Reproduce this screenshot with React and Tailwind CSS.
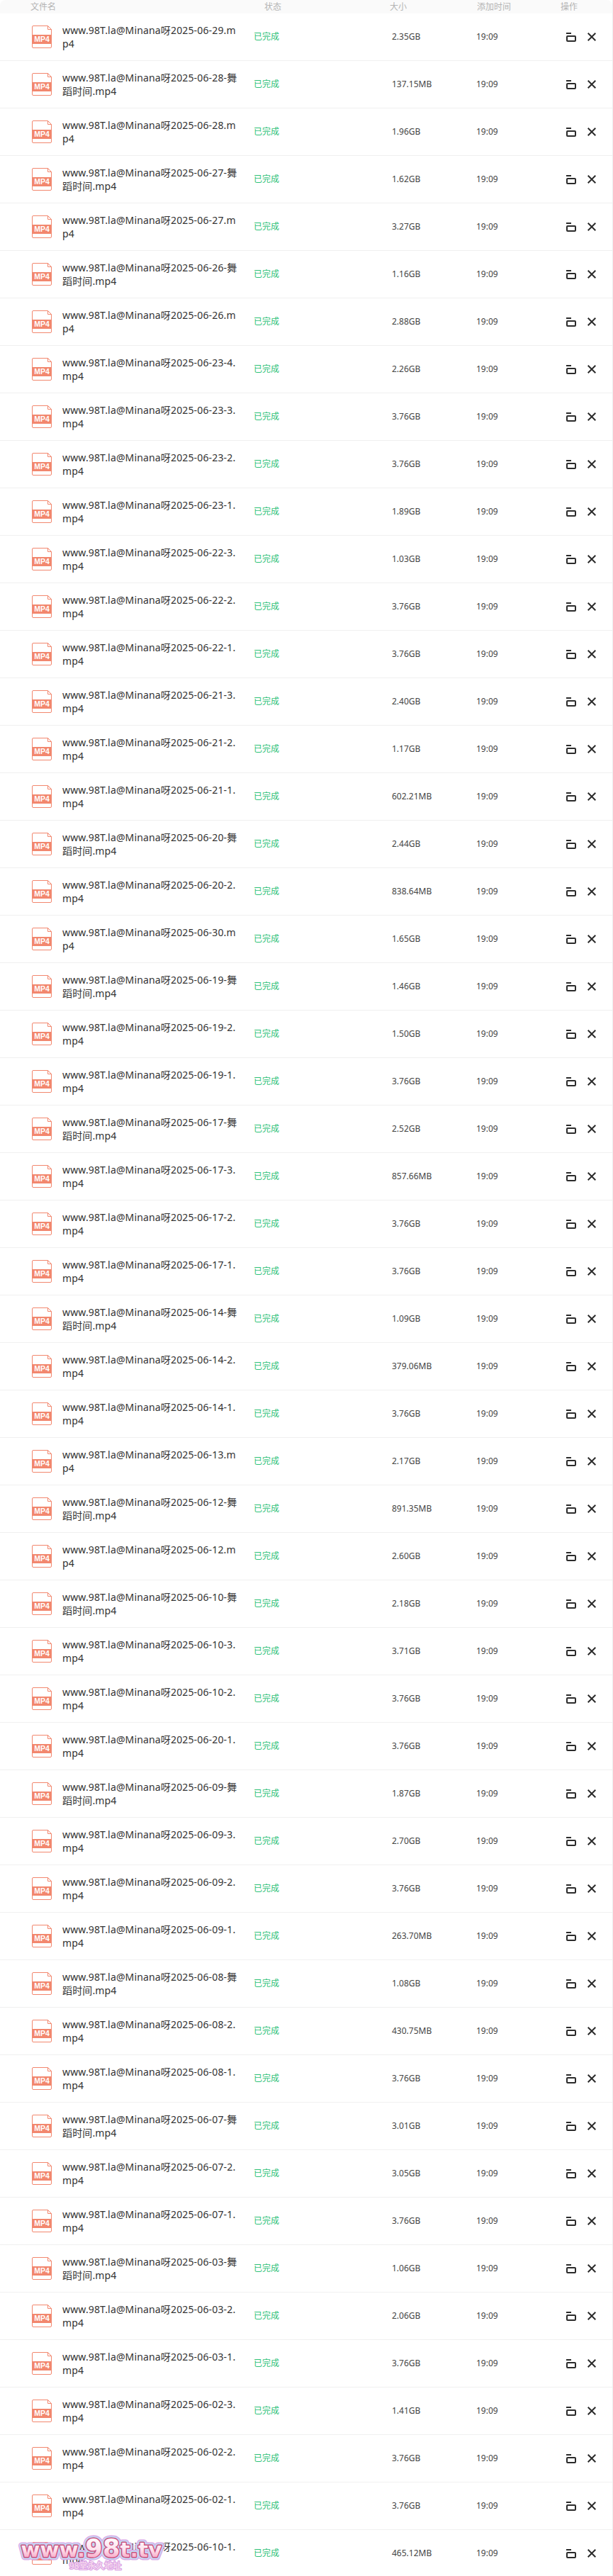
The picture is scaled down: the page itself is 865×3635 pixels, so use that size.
const DANCE = '-舞蹈时间';

// name suffix, size
const FILES = [
  ['06-29', '2.35GB'],
  ['06-28' + DANCE, '137.15MB'],
  ['06-28', '1.96GB'],
  ['06-27' + DANCE, '1.62GB'],
  ['06-27', '3.27GB'],
  ['06-26' + DANCE, '1.16GB'],
  ['06-26', '2.88GB'],
  ['06-23-4', '2.26GB'],
  ['06-23-3', '3.76GB'],
  ['06-23-2', '3.76GB'],
  ['06-23-1', '1.89GB'],
  ['06-22-3', '1.03GB'],
  ['06-22-2', '3.76GB'],
  ['06-22-1', '3.76GB'],
  ['06-21-3', '2.40GB'],
  ['06-21-2', '1.17GB'],
  ['06-21-1', '602.21MB'],
  ['06-20' + DANCE, '2.44GB'],
  ['06-20-2', '838.64MB'],
  ['06-30', '1.65GB'],
  ['06-19' + DANCE, '1.46GB'],
  ['06-19-2', '1.50GB'],
  ['06-19-1', '3.76GB'],
  ['06-17' + DANCE, '2.52GB'],
  ['06-17-3', '857.66MB'],
  ['06-17-2', '3.76GB'],
  ['06-17-1', '3.76GB'],
  ['06-14' + DANCE, '1.09GB'],
  ['06-14-2', '379.06MB'],
  ['06-14-1', '3.76GB'],
  ['06-13', '2.17GB'],
  ['06-12' + DANCE, '891.35MB'],
  ['06-12', '2.60GB'],
  ['06-10' + DANCE, '2.18GB'],
  ['06-10-3', '3.71GB'],
  ['06-10-2', '3.76GB'],
  ['06-20-1', '3.76GB'],
  ['06-09' + DANCE, '1.87GB'],
  ['06-09-3', '2.70GB'],
  ['06-09-2', '3.76GB'],
  ['06-09-1', '263.70MB'],
  ['06-08' + DANCE, '1.08GB'],
  ['06-08-2', '430.75MB'],
  ['06-08-1', '3.76GB'],
  ['06-07' + DANCE, '3.01GB'],
  ['06-07-2', '3.05GB'],
  ['06-07-1', '3.76GB'],
  ['06-03' + DANCE, '1.06GB'],
  ['06-03-2', '2.06GB'],
  ['06-03-1', '3.76GB'],
  ['06-02-3', '1.41GB'],
  ['06-02-2', '3.76GB'],
  ['06-02-1', '3.76GB'],
  ['06-10-1', '465.12MB'],
];

const Mp4Icon = () => (
  <div className="relative w-[28px] h-[32px] shrink-0">
    <svg width="28" height="32" viewBox="0 0 28 32">
      <path d="M2 .5H22.5L27.5 5.5V30a1.5 1.5 0 0 1-1.5 1.5H2A1.5 1.5 0 0 1 .5 30V2A1.5 1.5 0 0 1 2 .5Z" fill="#fff" stroke="#f2876e" />
      <path d="M22.5 .5V5.5H27.5" fill="none" stroke="#f2876e" />
      <rect x="0" y="13" width="28" height="13" fill="#f2876e" />
    </svg>
    <span className="absolute left-0 right-0 top-[13px] text-center text-[10.5px] leading-[13px] font-bold text-white font-['Liberation_Sans',sans-serif]">
      MP4
    </span>
  </div>
);

const FolderIcon = () => (
  <svg width="14" height="14" viewBox="0 0 14 14" fill="none" stroke="#2b2b2b" strokeWidth="2">
    <path d="M0 2H7" />
    <rect x="1" y="6" width="12" height="7" rx="1" />
  </svg>
);

const CloseIcon = () => (
  <svg width="12" height="12" viewBox="0 0 12 12" fill="none" stroke="#2b2b2b" strokeWidth="2">
    <path d="M.7 .7L11.3 11.3M11.3 .7L.7 11.3" />
  </svg>
);

const Watermark = () => (
  <svg width="230" height="65" viewBox="0 0 230 65" className="absolute left-[15px] bottom-0 overflow-visible">
    <defs>
      <linearGradient id="wm-fill" x1="0" y1="0" x2="0" y2="1">
        <stop offset="0.1" stopColor="#ffffff" />
        <stop offset="0.55" stopColor="#fde3ee" />
        <stop offset="1" stopColor="#f78db4" />
      </linearGradient>
      <text id="wm-text" x="14.5" y="37.5" fontSize="29" fontWeight="700" letterSpacing=".3" fontFamily="'DejaVu Sans', sans-serif">
        www.<tspan fontSize="35">98</tspan>t.tv
      </text>
      <text id="wm-sub" x="83" y="55" fontSize="12" fontFamily="'Noto Sans CJK SC', sans-serif">98堂永久地址</text>
    </defs>
    <use href="#wm-text" fill="#dba6e6" stroke="#dba6e6" strokeWidth="9" strokeLinejoin="round" />
    <use href="#wm-text" fill="#c3dcf6" stroke="#c3dcf6" strokeWidth="6.5" strokeLinejoin="round" />
    <use href="#wm-text" fill="#c9527f" stroke="#c9527f" strokeWidth="3" strokeLinejoin="round" />
    <use href="#wm-text" fill="url(#wm-fill)" />
    <use href="#wm-sub" fill="#dba6e6" stroke="#dba6e6" strokeWidth="2.5" strokeLinejoin="round" />
    <use href="#wm-sub" fill="#fbe3ee" />
  </svg>
);

const App = () => {
  return (
    <div className="relative h-[3635px] overflow-hidden bg-white border-r border-[#eeeeee] text-[12px] text-[#444] font-['Noto_Sans','Noto_Sans_CJK_SC',sans-serif]">
      {/* Table header */}
      <div className="grid grid-cols-[358px_192px_123px_118px_1fr] h-[19px] items-center bg-[#fafafa] rounded-t-lg text-[#b4b4b4]">
        <div className="pl-[43px]">文件名</div>
        <div className="pl-[15px]">状态</div>
        <div>大小</div>
        <div>添加时间</div>
        <div>操作</div>
      </div>

      {FILES.map(([name, size], i) => (
        <div
          key={i}
          className="grid grid-cols-[358px_195px_119px_127px_1fr] h-[67px] items-center border-b border-[#f0f0f0]"
        >
          <div className="flex items-center pl-[45px]">
            <Mp4Icon />
            <div className="ml-[15px] w-[252px] break-all text-[14px] leading-[19px] tracking-[0.15px] text-[#333]">
              www.98T.la@Minana呀2025-{name}.mp4
            </div>
          </div>
          <div className="text-[#2cc177]">已完成</div>
          <div>{size}</div>
          <div>19:09</div>
          <div className="flex items-center gap-[16px]">
            <FolderIcon />
            <CloseIcon />
          </div>
        </div>
      ))}

      <Watermark />
    </div>
  );
};

export default App;
